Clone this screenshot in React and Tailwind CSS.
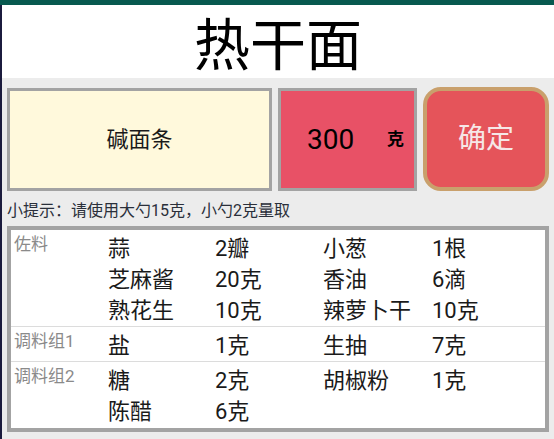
import React from 'react';

const groups = [
  {
    label: '佐料',
    items: [
      ['蒜', '2瓣', '小葱', '1根'],
      ['芝麻酱', '20克', '香油', '6滴'],
      ['熟花生', '10克', '辣萝卜干', '10克'],
    ],
  },
  {
    label: '调料组1',
    items: [['盐', '1克', '生抽', '7克']],
  },
  {
    label: '调料组2',
    items: [
      ['糖', '2克', '胡椒粉', '1克'],
      ['陈醋', '6克', '', ''],
    ],
  },
];

export default function App() {
  return (
    <div
      className="w-[554px] h-[439px] bg-[#ececec] flex flex-col overflow-hidden"
      style={{ fontFamily: 'Roboto, "Noto Sans CJK SC", sans-serif' }}
    >
      <div className="h-[5px] bg-[#07594f]" />
      <div className="flex-1 flex flex-col border-l-2 border-[#1b1b3d]">
        <div className="h-[73px] pt-[8px] bg-white flex items-center justify-center text-[56px] leading-none text-black">
          热干面
        </div>

        <div className="flex gap-[6px] pt-[10px] pl-[5px] pr-[5px] h-[114px]">
          <div className="w-[265px] h-[103px] border-[3px] border-[#a3a3a3] bg-[#fff9dc] flex items-center justify-center text-[22px] text-[#1a1a1a]">
            碱面条
          </div>
          <div className="w-[139px] h-[103px] border-[3px] border-[#a3a3a3] bg-[#e85166] flex items-center justify-between pl-[26px] pr-[10px]">
            <span className="text-[28px] text-black">300</span>
            <span className="text-[17px] font-bold text-black">克</span>
          </div>
          <div className="w-[126px] h-[104px] -mt-[1px] rounded-[18px] border-4 border-[#c9a06c] bg-[#e5545a] flex items-center justify-center text-[28px] text-[#f6e7e7]">
            确定
          </div>
        </div>

        <div className="pl-[5px] mt-[8px] text-[16px] leading-[22px] text-[#2a2f3a]">
          小提示：请使用大勺15克，小勺2克量取
        </div>

        <div className="ml-[5px] mr-[5px] mt-[4px] h-[206px] border-4 border-[#a3a3a3] bg-white">
          {groups.map((g, gi) => (
            <div
              key={g.label}
              className={
                gi < groups.length - 1
                  ? 'flex pt-[3px] border-b border-[#dcdcdc]'
                  : 'flex pt-[3px]'
              }
            >
              <div className="w-[97px] pl-[3px] text-[17px] leading-[22px] text-[#8a8a8a]">
                {g.label}
              </div>
              <div className="flex-1 grid grid-cols-[107px_108px_109px_1fr] text-[22px] leading-[31px] text-[#1a1a1a]">
                {g.items.map((row, ri) =>
                  row.map((cell, ci) => (
                    <div key={ri + '-' + ci}>{cell}</div>
                  ))
                )}
              </div>
            </div>
          ))}
        </div>
      </div>
    </div>
  );
}
